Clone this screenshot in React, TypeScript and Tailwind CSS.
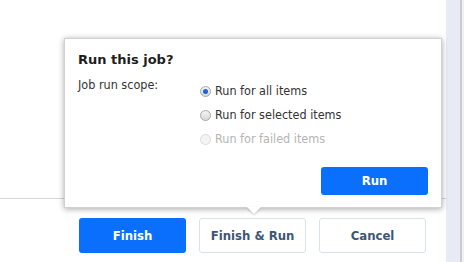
import React from "react";

function Radio({ checked, disabled }: { checked?: boolean; disabled?: boolean }) {
  return (
    <span
      className={
        "relative inline-block w-[11px] h-[11px] rounded-full border shrink-0 " +
        (disabled
          ? "border-[#dcdcdc] bg-[#f4f4f4]"
          : "border-[#a8a8a8] bg-gradient-to-b from-[#f4f4f4] to-[#d8d8d8]")
      }
    >
      {checked && (
        <span className="absolute left-[2px] top-[2px] w-[5px] h-[5px] rounded-full bg-[#1f63d6]" />
      )}
    </span>
  );
}

export default function App() {
  const font = { fontFamily: '"DejaVu Sans Condensed", "DejaVu Sans", Verdana, sans-serif' };
  return (
    <div className="relative w-[464px] h-[262px] bg-white overflow-hidden flex" style={font}>
      <div className="flex-1 flex flex-col">
        <div className="h-[199px] border-b border-[#d6d6d6]" />
        <div className="flex gap-[13px] pl-[79px] pt-[19px]">
          <button className="w-[107px] h-[35px] rounded-[3px] bg-[#0a6ffd] text-white text-[13px] font-bold">
            Finish
          </button>
          <button className="w-[107px] h-[35px] rounded-[3px] border border-[#d9e1ea] bg-white text-[#3d5677] text-[13px] font-bold">
            Finish &amp; Run
          </button>
          <button className="w-[107px] h-[35px] rounded-[3px] border border-[#d9e1ea] bg-white text-[#3d5677] text-[13px] font-bold">
            Cancel
          </button>
        </div>
      </div>
      <div className="w-[14px] bg-[#e7ebf3]" />
      <div className="w-[2px] bg-[#c9cbd0]" />
      <div className="w-[2px] bg-[#eef0f3]" />

      <div className="absolute left-[64px] top-[38px] w-[378px] h-[170px] bg-white border border-[#d0d0d0] shadow-[0_1px_6px_rgba(0,0,0,0.35)] flex flex-col px-[13px] pt-[11px] pb-[12px]">
        <div
          className="text-[13px] font-bold text-[#1e1e1e] leading-[20px]"
          style={{ fontFamily: '"DejaVu Sans", Verdana, sans-serif' }}
        >
          Run this job?
        </div>
        <div className="flex mt-[6px]">
          <div className="w-[122px] text-[12.5px] text-[#333] leading-[18px]">Job run scope:</div>
          <div className="flex flex-col gap-[6px] pt-[6px]">
            <label className="flex items-center gap-[4px] text-[12.5px] text-[#333] leading-[18px]">
              <Radio checked /> Run for all items
            </label>
            <label className="flex items-center gap-[4px] text-[12.5px] text-[#333] leading-[18px]">
              <Radio /> Run for selected items
            </label>
            <label className="flex items-center gap-[4px] text-[12.5px] text-[#b4b4b4] leading-[18px]">
              <Radio disabled /> Run for failed items
            </label>
          </div>
        </div>
        <div className="flex-1" />
        <div className="flex justify-end">
          <button className="w-[107px] h-[28px] rounded-[3px] bg-[#0a6ffd] text-white text-[13px] font-bold">
            Run
          </button>
        </div>
        <div className="absolute left-[182px] bottom-[-7px] w-0 h-0 border-l-[7px] border-r-[7px] border-t-[7px] border-l-transparent border-r-transparent border-t-white drop-shadow-[0_1px_1px_rgba(0,0,0,0.2)]" />
      </div>
    </div>
  );
}
